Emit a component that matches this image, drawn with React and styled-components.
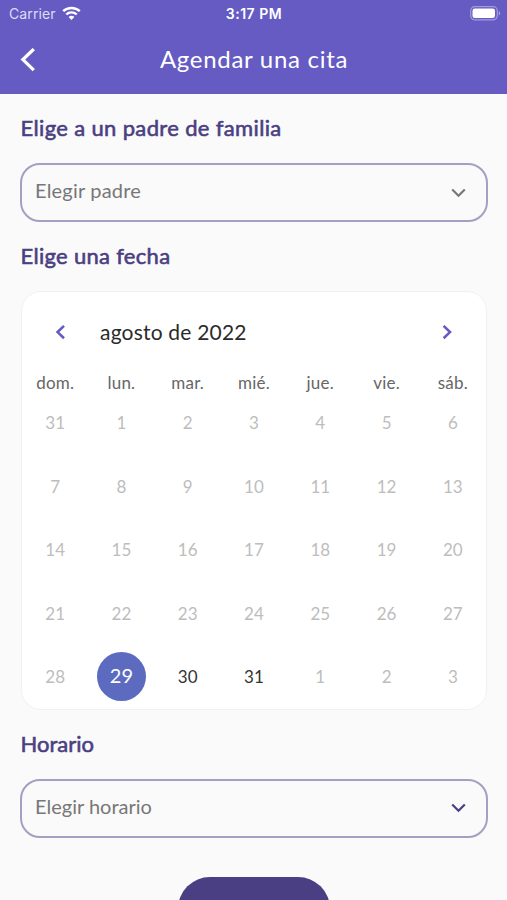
import React, { useState } from "react";
import styled, { createGlobalStyle } from "styled-components";

const weekdays = ["dom.", "lun.", "mar.", "mié.", "jue.", "vie.", "sáb."];

const weeks = [
  [31, 1, 2, 3, 4, 5, 6],
  [7, 8, 9, 10, 11, 12, 13],
  [14, 15, 16, 17, 18, 19, 20],
  [21, 22, 23, 24, 25, 26, 27],
  [28, 29, 30, 31, 1, 2, 3],
];

//Only the last days of the month can be booked
const isAvailable = (week, day) => week == 4 && day >= 29;

const Chevron = ({ points, width, height, color, stroke }) => (
  <svg width={width} height={height} fill="none">
    <polyline points={points} stroke={color} strokeWidth={stroke} />
  </svg>
);

const SelectField = ({ label, color, lift, spacing }) => (
  <Select>
    <SelectLabel $spacing={spacing}>{label}</SelectLabel>
    <SelectIcon $lift={lift}>
      <Chevron
        points="1.2,1.5 7.5,7.7 13.8,1.5"
        width={15}
        height={10}
        color={color}
        stroke={2.2}
      />
    </SelectIcon>
  </Select>
);

const App = () => {
  const [selected, setSelected] = useState(29);

  return (
    <Screen>
      <GlobalStyle />
      <Header>
        <StatusBar>
          <Carrier>
            Carrier
            <svg width="19" height="15" viewBox="0 0 19 15" fill="none">
              <path
                d="M1.2 5.2C5.8.8 13.2.8 17.8 5.2"
                stroke="#fff"
                strokeWidth="2.5"
              />
              <path
                d="M4.3 8.5c2.9-2.8 7.5-2.8 10.4 0"
                stroke="#fff"
                strokeWidth="2.4"
              />
              <path d="M6.6 11c1.6-1.6 4.2-1.6 5.8 0L9.5 14z" fill="#fff" />
            </svg>
          </Carrier>
          <Time>3:17 PM</Time>
          <Battery>
            <svg width="31" height="15" viewBox="0 0 31 15" fill="none">
              <rect
                x="0.7"
                y="0.7"
                width="26.6"
                height="13.1"
                rx="4"
                stroke="#fff"
                strokeOpacity="0.4"
                strokeWidth="1.2"
              />
              <rect x="2.5" y="2.5" width="22.5" height="9.5" rx="2.3" fill="#fff" />
              <path
                d="M28.8 5v4.5c1.9-.8 1.9-3.7 0-4.5z"
                fill="#fff"
                fillOpacity="0.45"
              />
            </svg>
          </Battery>
        </StatusBar>
        <NavBar>
          <Chevron
            points="13.8,1.1 2.9,11.6 13.8,22.1"
            width={16}
            height={24}
            color="#fff"
            stroke={3.3}
          />
          <NavTitle>Agendar una cita</NavTitle>
        </NavBar>
      </Header>

      <Content>
        <SectionTitle $spacing="0.35px">Elige a un padre de familia</SectionTitle>
        <SelectField label="Elegir padre" color="#777" spacing="0.2px" />

        <SectionTitle $spacing="0.3px">Elige una fecha</SectionTitle>
        <Calendar>
          <CalendarHeader>
            <Chevron
              points="9,0.9 2.6,7.1 9,13.3"
              width={10}
              height={15}
              color="#655bc3"
              stroke={2.6}
            />
            <Month>agosto de 2022</Month>
            <Chevron
              points="1.6,0.9 8,7.1 1.6,13.3"
              width={10}
              height={15}
              color="#655bc3"
              stroke={2.6}
            />
          </CalendarHeader>
          <Weekdays>
            {weekdays.map((name) => (
              <Weekday key={name}>{name}</Weekday>
            ))}
          </Weekdays>
          {weeks.map((days, week) => (
            <Week key={week}>
              {days.map((day) => {
                const available = isAvailable(week, day);
                return (
                  <Day
                    key={day}
                    $available={available}
                    $selected={available && day == selected}
                    onClick={() => available && setSelected(day)}
                  >
                    {day}
                  </Day>
                );
              })}
            </Week>
          ))}
        </Calendar>

        <SectionTitle $spacing="0">Horario</SectionTitle>
        <SelectField label="Elegir horario" color="#4b3f83" spacing="0" lift />

        <SubmitButton aria-label="Agendar" />
      </Content>
    </Screen>
  );
};

const GlobalStyle = createGlobalStyle`
  * {
    box-sizing: border-box;
  }

  body {
    margin: 0;
    background: #fafafa;
    overflow: hidden;
  }

  svg {
    display: block;
    flex: none;
  }
`;

const Screen = styled.div`
  width: 507px;
  height: 900px;
  overflow: hidden;
  background: #fafafa;
  font-family: Lato, "Noto Sans", sans-serif;
`;

const Header = styled.header`
  height: 94px;
  background: #655bc3;
  color: #fff;
`;

const StatusBar = styled.div`
  display: grid;
  grid-template-columns: 1fr auto 1fr;
  align-items: center;
  height: 27px;
  padding: 0 6px 0 9px;
  font-family: Inter, "Liberation Sans", sans-serif;
`;

const Carrier = styled.div`
  display: flex;
  align-items: center;
  gap: 6px;
  font-size: 14px;
  letter-spacing: 0.1px;
  color: #dedbf5;
`;

const Time = styled.div`
  margin-left: -2px;
  font-size: 14px;
  font-weight: 600;
  letter-spacing: 0.5px;
`;

const Battery = styled.div`
  justify-self: end;
`;

const NavBar = styled.div`
  display: grid;
  grid-template-columns: 16px 1fr 16px;
  align-items: center;
  height: 66px;
  padding: 0 20px;
`;

const NavTitle = styled.h1`
  margin: -2px 0 0 1px;
  text-align: center;
  font-size: 24px;
  font-weight: 400;
  line-height: 30px;
  letter-spacing: 0.7px;
`;

const Content = styled.main`
  display: flex;
  flex-direction: column;
  padding: 0 19px 0 20px;
`;

//Regular weight thickened by a thin outline
const SectionTitle = styled.h2`
  margin: 0;
  height: 69px;
  padding-left: 0.5px;
  line-height: 67px;
  font-size: 22px;
  font-weight: 400;
  letter-spacing: ${(props) => props.$spacing};
  color: #4b3f83;
  -webkit-text-stroke: 0.6px #4b3f83;
`;

const Select = styled.div`
  display: flex;
  justify-content: space-between;
  height: 59px;
  padding: 0 20px 0 13px;
  border: 2px solid #a59fc3;
  border-radius: 20px;
`;

const SelectLabel = styled.span`
  font-size: 20px;
  line-height: 51px;
  letter-spacing: ${(props) => props.$spacing};
  color: #777;
`;

const SelectIcon = styled.span`
  padding-top: ${(props) => (props.$lift ? "22px" : "23px")};
`;

const Calendar = styled.div`
  height: 419px;
  margin: 0 0 0 1px;
  width: 466px;
  border: 1px solid #f1f1f1;
  border-radius: 20px;
  background: #fff;
`;

const CalendarHeader = styled.div`
  display: flex;
  align-items: center;
  height: 80px;
  padding: 0 34px 0 33px;
`;

const Month = styled.div`
  flex: 1;
  margin-top: -2px;
  padding-left: 35px;
  font-size: 21px;
  letter-spacing: 0.2px;
  color: #2b2b2b;
`;

const Weekdays = styled.div`
  display: grid;
  grid-template-columns: repeat(7, 1fr);
  height: 19px;
`;

const Weekday = styled.span`
  text-align: center;
  font-size: 17px;
  line-height: 22px;
  letter-spacing: 0.2px;
  color: #666;
`;

const Week = styled.div`
  display: grid;
  grid-template-columns: repeat(7, 1fr);
  align-items: center;
  justify-items: center;
  height: 63.5px;
`;

const Day = styled.span`
  width: 49px;
  height: 49px;
  border-radius: 50%;
  text-align: center;
  line-height: ${(props) => (props.$selected ? "47px" : "49px")};
  font-size: ${(props) => (props.$selected ? "20px" : "17px")};
  color: ${(props) =>
    props.$selected ? "#fff" : props.$available ? "#333" : "#bdbdbd"};
  background: ${(props) => (props.$selected ? "#5c6bc0" : "transparent")};
`;

const SubmitButton = styled.button`
  align-self: center;
  width: 152px;
  height: 64px;
  margin-top: 39px;
  border: none;
  border-radius: 32px;
  background: #4b3f83;
`;

export default App;
